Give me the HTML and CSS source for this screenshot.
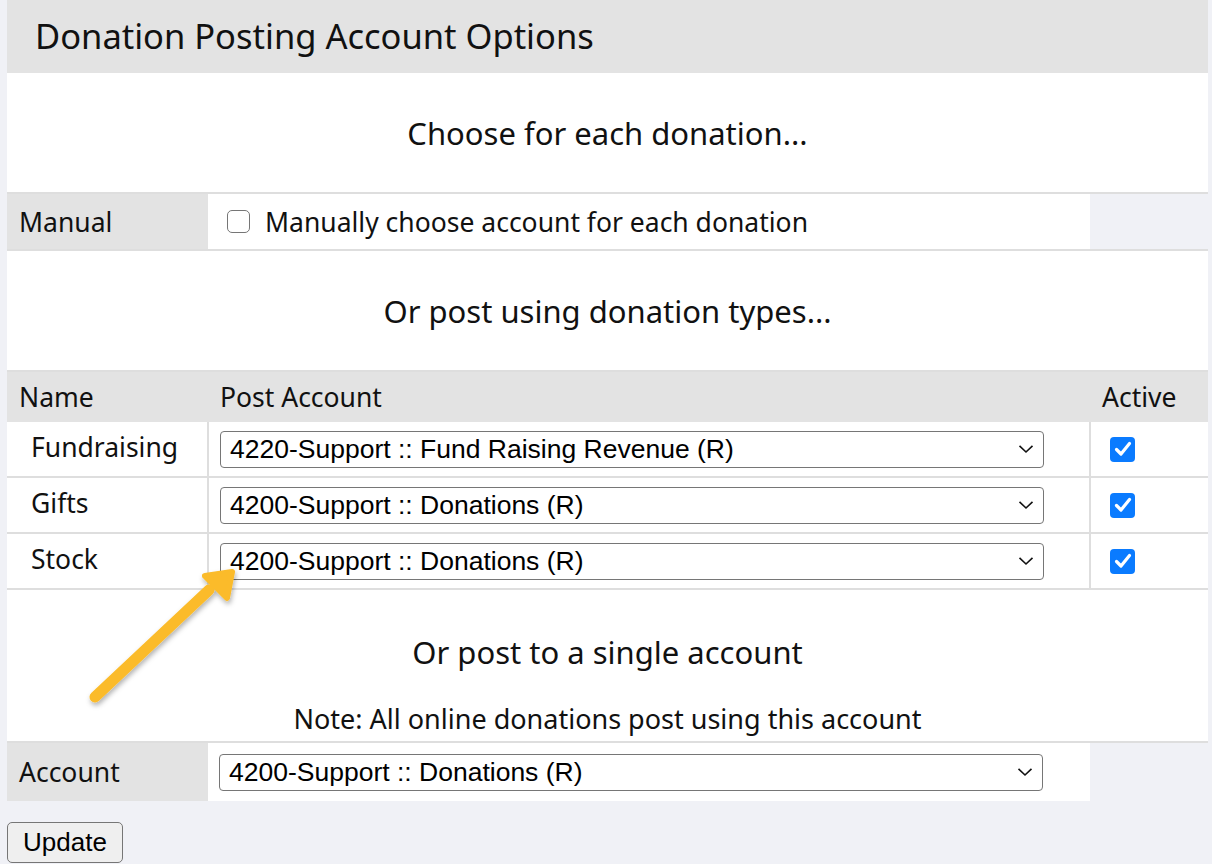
FILE: index.html
```html
<!DOCTYPE html>
<html>
<head>
<meta charset="utf-8">
<link rel="stylesheet" href="styles.css">
</head>
<body>
<div class="page">
  <table class="opts">
    <colgroup><col class="c1"><col class="c2"><col class="c3"></colgroup>
    <tr><th colspan="3" class="title">Donation Posting Account Options</th></tr>
    <tr><td colspan="3" class="section s1">Choose for each donation...</td></tr>
    <tr class="bordered">
      <td class="label">Manual</td>
      <td class="val"><label class="chk-line"><span class="cb"></span>Manually choose account for each donation</label></td>
      <td class="empty"></td>
    </tr>
    <tr><td colspan="3" class="section s2">Or post using donation types...</td></tr>
    <tr class="head">
      <td class="hname">Name</td>
      <td class="hacct">Post Account</td>
      <td class="hact">Active</td>
    </tr>
    <tr class="data">
      <td class="name">Fundraising</td>
      <td class="sel-cell"><div class="select">4220-Support :: Fund Raising Revenue (R)<span class="chev"><svg width="16" height="10" viewBox="0 0 16 10"><path d="M1.5 1.8 L8 8 L14.5 1.8" fill="none" stroke="#111" stroke-width="1.6"/></svg></span></div></td>
      <td class="act"><span class="cb on"><svg width="18" height="16" viewBox="0 0 18 16"><path d="M2.5 8.5 L7 13 L15.5 2.5" fill="none" stroke="#fff" stroke-width="3.2" stroke-linecap="round" stroke-linejoin="round"/></svg></span></td>
    </tr>
    <tr class="data">
      <td class="name">Gifts</td>
      <td class="sel-cell"><div class="select">4200-Support :: Donations (R)<span class="chev"><svg width="16" height="10" viewBox="0 0 16 10"><path d="M1.5 1.8 L8 8 L14.5 1.8" fill="none" stroke="#111" stroke-width="1.6"/></svg></span></div></td>
      <td class="act"><span class="cb on"><svg width="18" height="16" viewBox="0 0 18 16"><path d="M2.5 8.5 L7 13 L15.5 2.5" fill="none" stroke="#fff" stroke-width="3.2" stroke-linecap="round" stroke-linejoin="round"/></svg></span></td>
    </tr>
    <tr class="data">
      <td class="name">Stock</td>
      <td class="sel-cell"><div class="select">4200-Support :: Donations (R)<span class="chev"><svg width="16" height="10" viewBox="0 0 16 10"><path d="M1.5 1.8 L8 8 L14.5 1.8" fill="none" stroke="#111" stroke-width="1.6"/></svg></span></div></td>
      <td class="act"><span class="cb on"><svg width="18" height="16" viewBox="0 0 18 16"><path d="M2.5 8.5 L7 13 L15.5 2.5" fill="none" stroke="#fff" stroke-width="3.2" stroke-linecap="round" stroke-linejoin="round"/></svg></span></td>
    </tr>
    <tr><td colspan="3" class="section s3">
      <div class="s3-head">Or post to a single account</div>
      <div class="note">Note: All online donations post using this account</div>
    </td></tr>
    <tr class="acct-row">
      <td class="label">Account</td>
      <td class="sel-cell"><div class="select">4200-Support :: Donations (R)<span class="chev"><svg width="16" height="10" viewBox="0 0 16 10"><path d="M1.5 1.8 L8 8 L14.5 1.8" fill="none" stroke="#111" stroke-width="1.6"/></svg></span></div></td>
      <td class="empty"></td>
    </tr>
  </table>
  <button class="update">Update</button>
  <svg class="arrow" width="180" height="160" viewBox="0 0 180 160">
    <defs>
      <filter id="sh" x="-20%" y="-20%" width="140%" height="140%">
        <feDropShadow dx="1" dy="3" stdDeviation="2.5" flood-color="#000" flood-opacity="0.3"/>
      </filter>
    </defs>
    <g filter="url(#sh)" fill="#fbbb2a" stroke="#fbbb2a" stroke-linecap="round" stroke-linejoin="round">
      <path d="M14 135 L128 28" fill="none" stroke-width="11"/>
      <path d="M151 10 L124 14 L146 36 Z" stroke-width="6"/>
    </g>
  </svg>
</div>
</body>
</html>
```

FILE: styles.css
```css
html, body {
  margin: 0;
  padding: 0;
  background: #f0f1f6;
}
.page {
  position: relative;
  padding-left: 7px;
  font-family: "Noto Sans", "Open Sans", sans-serif;
  color: #111;
}
.opts {
  width: 1201px;
  border-collapse: collapse;
  table-layout: fixed;
}
.c1 { width: 201px; }
.c2 { width: 882px; }
.c3 { width: 118px; }
.opts td, .opts th {
  padding: 0;
  vertical-align: middle;
}
.title {
  background: #e3e3e3;
  height: 72px;
  text-align: left;
  font-weight: normal;
  font-size: 34.5px;
  line-height: 44px;
  padding-left: 28px !important;
  border-bottom: 1px solid #e3e3e3;
}
.section {
  background: #fff;
  text-align: center;
  font-size: 31px;
  line-height: 42px;
  border-bottom: 2px solid #dedede;
}
.s1 { height: 119px; }
.s2 { height: 119px; }
.s3 {
  height: 151px;
  vertical-align: top !important;
}
.s3-head { padding-top: 41px; }
.note {
  font-size: 27px;
  padding-top: 28px;
  line-height: 36px;
}
.bordered td { border-bottom: 2px solid #dedede; }
.label {
  background: #e3e3e3;
  font-size: 26.5px;
  line-height: 36px;
  padding-left: 12px !important;
  height: 55px;
}
.val {
  background: #fff;
  font-size: 26.5px;
  line-height: 36px;
}
.chk-line {
  display: flex;
  align-items: center;
  gap: 15px;
  padding-left: 19px;
}
.cb {
  display: inline-block;
  width: 21px;
  height: 21px;
  border: 1.5px solid #767676;
  border-radius: 5px;
  background: #fff;
}
.cb.on {
  width: 25px;
  height: 25px;
  border: none;
  border-radius: 4px;
  background: #0a7bff;
  display: flex;
  align-items: center;
  justify-content: center;
}
.empty { background: transparent; }
.head td {
  background: #e3e3e3;
  font-size: 26.5px;
  line-height: 36px;
  height: 50px;
}
.hname { padding-left: 12px !important; }
.hacct { padding-left: 12px !important; }
.hact { padding-left: 12px !important; }
.data td {
  background: #fff;
  height: 54px;
  border-bottom: 2px solid #dedede;
}
.data td + td { border-left: 2px solid #dedede; }
.data td.name {
  font-size: 26.5px;
  line-height: 36px;
  padding-left: 24px !important;
  padding-bottom: 5px !important;
  height: 49px;
}
.sel-cell {
  background: #fff;
  padding-left: 11px !important;
}
.select {
  position: relative;
  box-sizing: border-box;
  width: 824px;
  height: 37px;
  border: 1.5px solid #767676;
  border-radius: 4px;
  background: #fff;
  font-family: "Liberation Sans", Arial, sans-serif;
  font-size: 26.5px;
  line-height: 34px;
  padding-left: 9px;
  color: #000;
}
.chev {
  position: absolute;
  right: 9px;
  top: 12px;
  line-height: 0;
}
.act { padding-left: 19px !important; }
.acct-row td { height: 58px; }
.acct-row .sel-cell { background: #fff; }
.update {
  display: block;
  margin-top: 21px;
  box-sizing: border-box;
  width: 116px;
  height: 41px;
  font-family: "Liberation Sans", Arial, sans-serif;
  font-size: 26px;
  color: #000;
  background: #efefef;
  border: 1.5px solid #767676;
  border-radius: 5px;
  padding: 0;
}
.arrow {
  position: absolute;
  left: 81px;
  top: 562px;
}
```
